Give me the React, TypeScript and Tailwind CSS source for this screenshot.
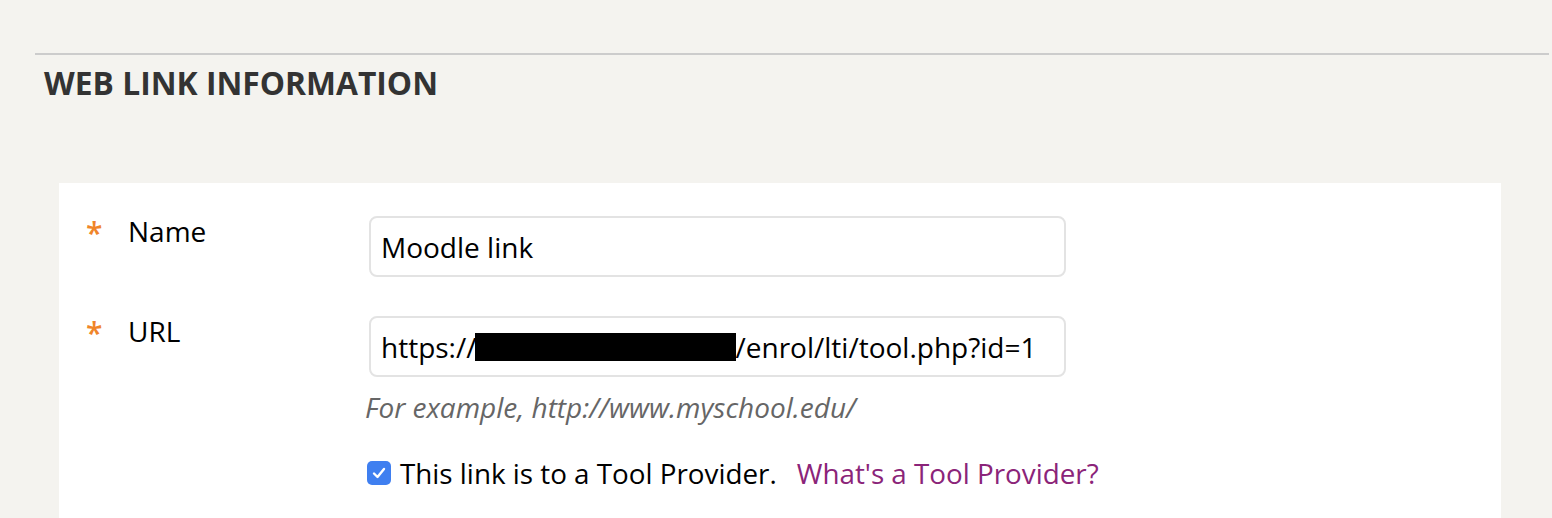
import React from "react";

export default function App() {
  return (
    <div
      className="w-full h-[518px] overflow-hidden bg-[#f4f3ef] text-[#000]"
      style={{ fontFamily: '"Open Sans", "Noto Sans", sans-serif' }}
    >
      <div className="pt-[53px] pl-[35px] pr-[3px]">
        <div className="h-[2px] bg-[#cccccc]" />
        <h2 className="mt-[6px] ml-[9px] text-[31.8px] leading-[44px] font-bold text-[#333333]">
          WEB LINK INFORMATION
        </h2>
      </div>
      <div className="mt-[78px] ml-[59px] mr-[51px] bg-white h-[400px] pt-[29px]">
        {/* Name row */}
        <div className="flex items-start">
          <div className="w-[310px] flex items-start pl-[27px]">
            <span className="w-[42px] text-[30px] leading-[38px] font-semibold text-[#f0852a] mt-[2px]">*</span>
            <span className="text-[28px] leading-[38px]">Name</span>
          </div>
          <div className="mt-[4px] w-[697px] h-[61px] border-2 border-[#e3e3e3] rounded-[8px] flex items-center pl-[10px] text-[28px]">
            Moodle link
          </div>
        </div>
        {/* URL row */}
        <div className="flex items-start mt-[35px]">
          <div className="w-[310px] flex items-start pl-[27px]">
            <span className="w-[42px] text-[30px] leading-[38px] font-semibold text-[#f0852a] mt-[2px]">*</span>
            <span className="text-[28px] leading-[38px]">URL</span>
          </div>
          <div className="flex flex-col">
            <div className="mt-[4px] w-[697px] h-[61px] border-2 border-[#e3e3e3] rounded-[8px] flex items-center pl-[10px] text-[28px]">
              <span>https://</span>
              <span className="inline-block -ml-[2px] w-[261px] h-[28px] bg-black" />
              <span>/enrol/lti/tool.php?id=1</span>
            </div>
            <div className="mt-[11px] -ml-[4px] text-[28px] leading-[38px] italic text-[#666666]">
              For example, http://www.myschool.edu/
            </div>
            <div className="mt-[28px] -ml-[2px] flex items-center text-[27.8px] leading-[38px]">
              <span className="w-[24px] h-[24px] rounded-[5px] bg-[#3f7ff0] flex items-center justify-center mr-[9px]">
                <svg width="20" height="20" viewBox="0 0 20 20">
                  <path d="M5 10.5 L8.5 14 L15 6" fill="none" stroke="white" strokeWidth="2.4" strokeLinecap="round" strokeLinejoin="round" />
                </svg>
              </span>
              <span>This link is to a Tool Provider.</span>
              <a className="ml-[20px] text-[#8b2479]">What's a Tool Provider?</a>
            </div>
          </div>
        </div>
      </div>
    </div>
  );
}
